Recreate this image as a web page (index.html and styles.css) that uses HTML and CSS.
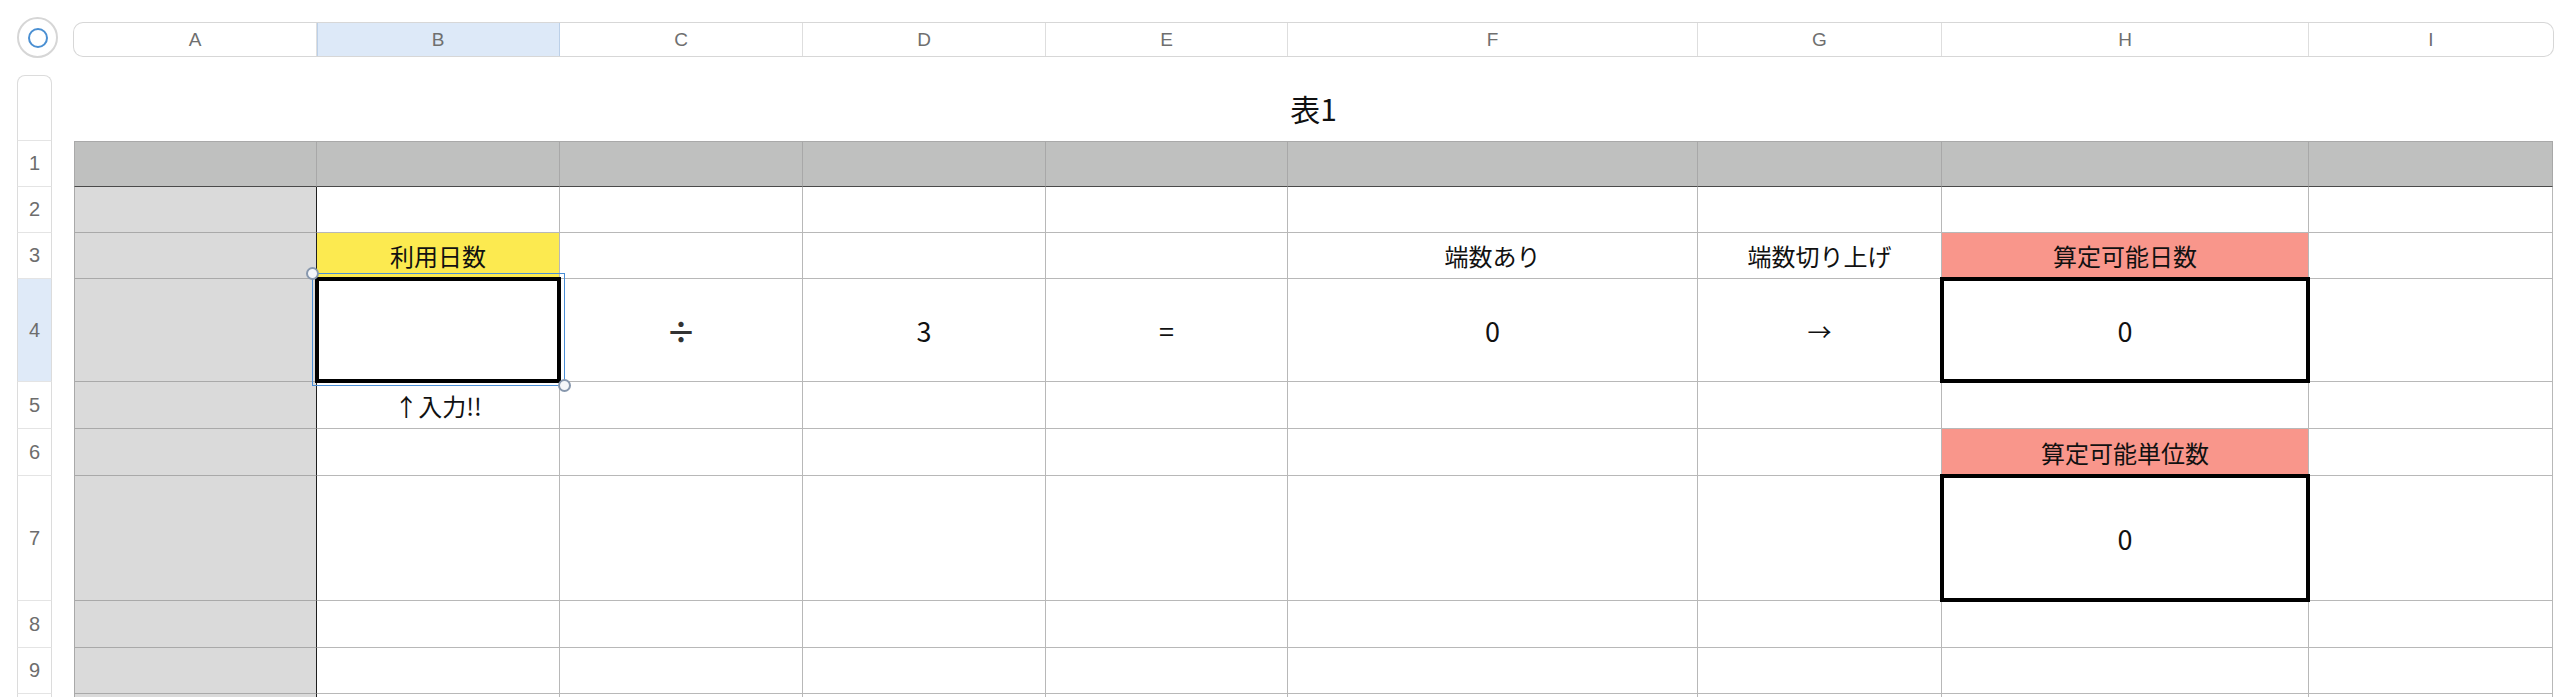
FILE: index.html
```html
<!DOCTYPE html>
<html lang="ja">
<head>
<meta charset="utf-8">
<title>表1</title>
<link rel="stylesheet" href="styles.css">
</head>
<body>
<div class="sheet">
  <div class="corner"><div class="select-all"><span class="ring"></span></div></div>
  <div class="colhdr">
    <div class="ch">A</div>
    <div class="ch sel">B</div>
    <div class="ch">C</div>
    <div class="ch">D</div>
    <div class="ch">E</div>
    <div class="ch">F</div>
    <div class="ch">G</div>
    <div class="ch">H</div>
    <div class="ch">I</div>
  </div>
  <div class="rowhdr">
    <div class="rh-top"></div>
    <div class="rh">1</div>
    <div class="rh">2</div>
    <div class="rh">3</div>
    <div class="rh sel">4</div>
    <div class="rh">5</div>
    <div class="rh">6</div>
    <div class="rh">7</div>
    <div class="rh">8</div>
    <div class="rh">9</div>
    <div class="rh"></div>
  </div>
  <div class="tablewrap">
    <div class="title">表1</div>
    <div class="grid">
      <!-- row 1 -->
      <div class="c hd a"></div><div class="c hd"></div><div class="c hd"></div><div class="c hd"></div><div class="c hd"></div><div class="c hd"></div><div class="c hd"></div><div class="c hd"></div><div class="c hd"></div>
      <!-- row 2 -->
      <div class="c a"></div><div class="c"></div><div class="c"></div><div class="c"></div><div class="c"></div><div class="c"></div><div class="c"></div><div class="c"></div><div class="c"></div>
      <!-- row 3 -->
      <div class="c a"></div><div class="c yellow">利用日数</div><div class="c"></div><div class="c"></div><div class="c"></div><div class="c">端数あり</div><div class="c">端数切り上げ</div><div class="c salmon">算定可能日数</div><div class="c"></div>
      <!-- row 4 -->
      <div class="c a"></div>
      <div class="c thick"><span class="selection"><span class="handle tl"></span><span class="handle br"></span></span></div>
      <div class="c op">÷</div><div class="c num">3</div><div class="c num">=</div><div class="c num">0</div><div class="c">→</div><div class="c thick num">0</div><div class="c"></div>
      <!-- row 5 -->
      <div class="c a"></div><div class="c">↑入力!!</div><div class="c"></div><div class="c"></div><div class="c"></div><div class="c"></div><div class="c"></div><div class="c"></div><div class="c"></div>
      <!-- row 6 -->
      <div class="c a"></div><div class="c"></div><div class="c"></div><div class="c"></div><div class="c"></div><div class="c"></div><div class="c"></div><div class="c salmon">算定可能単位数</div><div class="c"></div>
      <!-- row 7 -->
      <div class="c a"></div><div class="c"></div><div class="c"></div><div class="c"></div><div class="c"></div><div class="c"></div><div class="c"></div><div class="c thick num">0</div><div class="c"></div>
      <!-- row 8 -->
      <div class="c a"></div><div class="c"></div><div class="c"></div><div class="c"></div><div class="c"></div><div class="c"></div><div class="c"></div><div class="c"></div><div class="c"></div>
      <!-- row 9 -->
      <div class="c a"></div><div class="c"></div><div class="c"></div><div class="c"></div><div class="c"></div><div class="c"></div><div class="c"></div><div class="c"></div><div class="c"></div>
      <!-- row 10 -->
      <div class="c a"></div><div class="c"></div><div class="c"></div><div class="c"></div><div class="c"></div><div class="c"></div><div class="c"></div><div class="c"></div><div class="c"></div>
    </div>
  </div>
</div>
</body>
</html>
```
FILE: styles.css
```css
html, body {
  margin: 0;
  padding: 0;
  background: #ffffff;
}
body {
  width: 2560px;
  height: 697px;
  overflow: hidden;
  font-family: "Noto Sans CJK JP", "Noto Sans", sans-serif;
  color: #111111;
}
.sheet {
  display: grid;
  grid-template-columns: 57px 2479px;
  grid-template-rows: 41px auto;
  padding: 17px 0 0 17px;
}
.corner {
  display: flex;
}
.select-all {
  box-sizing: border-box;
  width: 41px;
  height: 41px;
  border-radius: 50%;
  border: 2px solid #d6d6d6;
  background: #fff;
  display: flex;
  align-items: center;
  justify-content: center;
}
.ring {
  box-sizing: border-box;
  width: 20px;
  height: 20px;
  border-radius: 50%;
  border: 2px solid #4a8fd2;
}
.colhdr {
  margin-top: 6px;
  height: 33px;
  display: grid;
  grid-template-columns: 243px 243px 243px 243px 242px 410px 244px 367px 244px;
  border-radius: 9px;
  box-shadow: 0 0 0 1px #d7d7d7;
  overflow: hidden;
  font-family: "Liberation Sans", Arial, sans-serif;
  font-size: 19px;
  color: #6f6f6f;
}
.ch {
  display: flex;
  align-items: center;
  justify-content: center;
  border-right: 1px solid #dedede;
}
.ch:last-child {
  border-right: none;
}
.ch.sel {
  background: #dde9f8;
  border-right-color: #bcd0e8;
  box-shadow: inset 1px 0 0 #bcd0e8;
}
.rowhdr {
  width: 35px;
  margin-top: 17px;
  display: grid;
  grid-template-rows: 66px 46px 46px 46px 103px 47px 47px 125px 47px 46px 46px;
  font-family: "Liberation Sans", Arial, sans-serif;
  font-size: 20px;
  color: #6d6d6d;
}
.rh-top {
  box-sizing: border-box;
  border: 1px solid #dcdcdc;
  border-bottom-color: #e4e4e4;
  border-radius: 8px 8px 0 0;
}
.rh {
  box-sizing: border-box;
  border-left: 1px solid #dcdcdc;
  border-right: 1px solid #dcdcdc;
  border-bottom: 1px solid #e4e4e4;
  display: flex;
  align-items: center;
  justify-content: center;
}
.rh.sel {
  background: #dfeaf8;
}
.tablewrap {
  display: flex;
  flex-direction: column;
}
.title {
  height: 83px;
  box-sizing: border-box;
  padding-top: 35px;
  line-height: 30px;
  font-size: 30px;
  text-align: center;
  color: #111;
}
.grid {
  display: grid;
  grid-template-columns: 243px 243px 243px 243px 242px 410px 244px 367px 244px;
  grid-template-rows: 46px 46px 46px 103px 47px 47px 125px 47px 46px 46px;
  font-size: 24px;
}
.c {
  position: relative;
  box-sizing: border-box;
  border-right: 1px solid #b8b8b8;
  border-bottom: 1px solid #b8b8b8;
  display: flex;
  align-items: center;
  justify-content: center;
  white-space: nowrap;
}
.c.num {
  font-size: 27px;
}
.c.hd {
  background: #bfc0bf;
  border-top: 1px solid #a9a9a9;
  border-right-color: #a8a8a8;
  border-bottom-color: #4a4a4a;
}
.c.a {
  background: #dadada;
  border-left: 1px solid #a9a9a9;
  border-right-color: #1e1e1e;
  border-bottom-color: #a9a9a9;
}
.c.hd.a {
  background: #bfc0bf;
  border-right-color: #a8a8a8;
  border-bottom-color: #4a4a4a;
}
.c.yellow {
  background: #fcea50;
}
.c.salmon {
  background: #f9968b;
}
.c.op {
  font-size: 30px;
  font-weight: 700;
  color: #333;
}
.c.thick::after {
  content: "";
  position: absolute;
  top: -2px;
  left: -2px;
  right: -2px;
  bottom: -2px;
  border: 4px solid #000;
  z-index: 2;
  pointer-events: none;
}
.selection {
  position: absolute;
  top: -6px;
  left: -5px;
  right: -6px;
  bottom: -5px;
  border: 1px solid #4a8ed6;
  z-index: 3;
}
.handle {
  position: absolute;
  box-sizing: border-box;
  width: 13px;
  height: 13px;
  border-radius: 50%;
  background: #f4f6f9;
  border: 2px solid #8797ad;
}
.handle.tl {
  top: -7px;
  left: -7px;
}
.handle.br {
  bottom: -7px;
  right: -7px;
}
```
